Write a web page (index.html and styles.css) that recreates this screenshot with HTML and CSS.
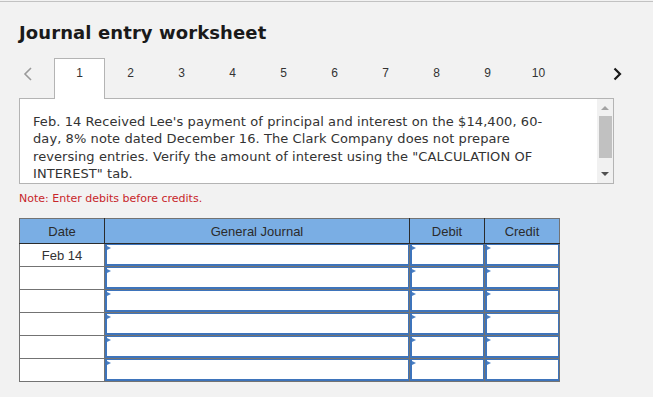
FILE: index.html
```html
<!DOCTYPE html>
<html lang="en">
<head>
    <meta charset="UTF-8">
    <title>Journal entry worksheet</title>
    <link rel="stylesheet" href="styles.css">
</head>
<body>
    <div class="worksheet">
        <h1>Journal entry worksheet</h1>

        <div class="tabs">
            <span class="nav nav-prev">
                <svg width="9" height="14" viewBox="0 0 9 14"><polyline points="8,1 2,7 8,13" fill="none" stroke="#9a9a9a" stroke-width="1.6"/></svg>
            </span>
            <span class="tab active">1</span>
            <span class="tab">2</span>
            <span class="tab">3</span>
            <span class="tab">4</span>
            <span class="tab">5</span>
            <span class="tab">6</span>
            <span class="tab">7</span>
            <span class="tab">8</span>
            <span class="tab">9</span>
            <span class="tab">10</span>
            <span class="nav nav-next">
                <svg width="9" height="14" viewBox="0 0 9 14"><polyline points="1.5,1.5 7,7 1.5,12.5" fill="none" stroke="#1a1a1a" stroke-width="2.2"/></svg>
            </span>
        </div>

        <div class="question">
            <div class="question-text">
                Feb. 14 Received Lee's payment of principal and interest on the $14,400, 60-day, 8% note dated December 16. The Clark Company does not prepare reversing entries. Verify the amount of interest using the "CALCULATION OF INTEREST" tab.
            </div>
            <div class="scrollbar">
                <span class="arrow arrow-up"></span>
                <span class="thumb"></span>
                <span class="arrow arrow-down"></span>
            </div>
        </div>

        <p class="note">Note: Enter debits before credits.</p>

        <table class="journal">
            <thead>
                <tr>
                    <th class="col-date">Date</th>
                    <th class="col-account">General Journal</th>
                    <th class="col-amount">Debit</th>
                    <th class="col-amount">Credit</th>
                </tr>
            </thead>
            <tbody>
                <tr>
                    <td class="date">Feb 14</td>
                    <td><div class="entry"></div></td>
                    <td><div class="entry"></div></td>
                    <td><div class="entry"></div></td>
                </tr>
                <tr>
                    <td class="date"></td>
                    <td><div class="entry"></div></td>
                    <td><div class="entry"></div></td>
                    <td><div class="entry"></div></td>
                </tr>
                <tr>
                    <td class="date"></td>
                    <td><div class="entry"></div></td>
                    <td><div class="entry"></div></td>
                    <td><div class="entry"></div></td>
                </tr>
                <tr>
                    <td class="date"></td>
                    <td><div class="entry"></div></td>
                    <td><div class="entry"></div></td>
                    <td><div class="entry"></div></td>
                </tr>
                <tr>
                    <td class="date"></td>
                    <td><div class="entry"></div></td>
                    <td><div class="entry"></div></td>
                    <td><div class="entry"></div></td>
                </tr>
                <tr>
                    <td class="date"></td>
                    <td><div class="entry"></div></td>
                    <td><div class="entry"></div></td>
                    <td><div class="entry"></div></td>
                </tr>
            </tbody>
        </table>
    </div>
</body>
</html>
```

FILE: styles.css
```css
/* Journal entry worksheet */
html, body {
    margin: 0;
    padding: 0;
    background-color: #f2f2f2;
}

body {
    padding-top: 1px;
}

.worksheet {
    border-top: 1px solid #c2c2c2;
    padding: 0 0 0 19px;
    font-family: "DejaVu Sans", Verdana, sans-serif;
    color: #333;
}

h1 {
    margin: 0;
    padding-top: 20px;
    font-size: 18px;
    line-height: 22px;
    font-weight: bold;
    color: #1a1a1a;
    letter-spacing: 0.1px;
}

.tabs {
    display: flex;
    align-items: flex-start;
    height: 40px;
    margin-top: 14px;
    font-family: "Liberation Sans", Arial, sans-serif;
    font-size: 12px;
}

.nav {
    display: flex;
    height: 31px;
    align-items: center;
}

.nav-prev {
    width: 35px;
    padding-left: 4px;
    box-sizing: border-box;
}

.nav-next {
    margin-left: 49px;
}

.tab {
    width: 51px;
    height: 40px;
    box-sizing: border-box;
    padding-top: 7px;
    line-height: 16px;
    text-align: center;
    color: #333;
}

.tab.active {
    width: 51px;
    background: #fff;
    border: 1px solid #b4b4b4;
    border-bottom: none;
    height: 41px;
    position: relative;
    z-index: 1;
    padding-top: 6px;
}

.question {
    display: flex;
    width: 595px;
    height: 86px;
    box-sizing: border-box;
    background: #fff;
    border: 1px solid #b4b4b4;
}

.question-text {
    flex: 1;
    overflow: hidden;
    padding: 14px 46px 0 13px;
    font-size: 13px;
    line-height: 17.33px;
    letter-spacing: 0.08px;
    color: #333;
}

.scrollbar {
    width: 16px;
    display: flex;
    flex-direction: column;
    align-items: center;
    background: #f1f1f1;
}

.arrow {
    width: 0;
    height: 0;
    border-left: 4px solid transparent;
    border-right: 4px solid transparent;
}

.arrow-up {
    margin-top: 7px;
    border-bottom: 4px solid #a3a3a3;
}

.arrow-down {
    margin-top: auto;
    margin-bottom: 7px;
    border-top: 4px solid #505050;
}

.thumb {
    width: 13px;
    height: 42px;
    margin-top: 6px;
    background: #c1c1c1;
}

.note {
    margin: 8px 0 0;
    font-size: 11px;
    line-height: 14px;
    color: #c8262a;
}

.journal {
    margin-top: 12px;
    width: 540px;
    border-collapse: collapse;
    table-layout: fixed;
    font-family: "Liberation Sans", Arial, sans-serif;
    font-size: 13px;
    border: 1px solid #737373;
}

.journal th {
    height: 24px;
    padding: 0;
    background: #7aaee4;
    color: #2b2b2b;
    font-weight: normal;
    border-right: 1px solid #2b2b2b;
    border-bottom: 1px solid #2b2b2b;
}

.journal th:last-child {
    border-right: 1px solid #737373;
}

.col-date { width: 84px; }
.col-account { width: 304px; }
.col-amount { width: 74px; }

.journal td {
    height: 22px;
    padding: 0;
    border: 1px solid #737373;
    background: #fff;
}

.journal td.date {
    text-align: center;
    color: #333;
}

.entry {
    position: relative;
    height: 22px;
    box-sizing: border-box;
    border: 1px solid #3e74bb;
    border-bottom-width: 2px;
    border-left-width: 2px;
}

.entry::before {
    content: "";
    position: absolute;
    left: 0;
    top: 1px;
    border-top: 2.5px solid transparent;
    border-bottom: 2.5px solid transparent;
    border-left: 4px solid #4a7fc3;
}
```
